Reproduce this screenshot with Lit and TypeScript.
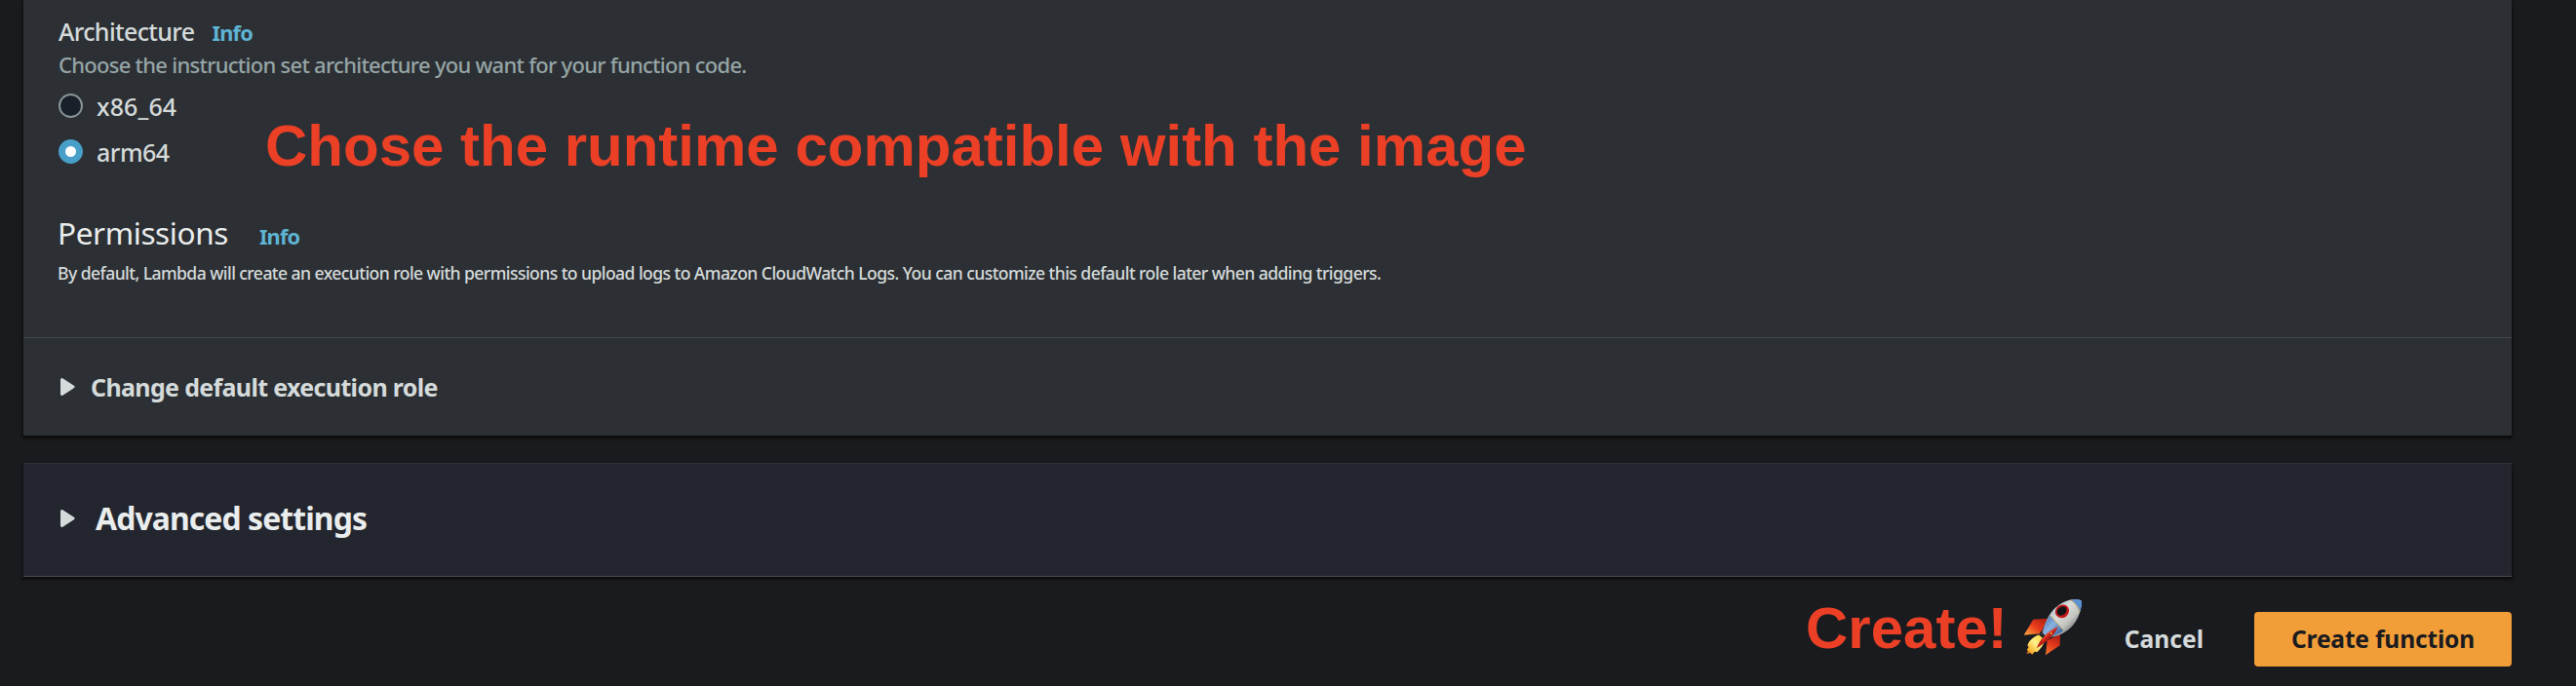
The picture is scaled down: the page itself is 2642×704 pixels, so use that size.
import { LitElement, html, css, svg } from "lit";

const rocket = svg`
  <defs>
    <linearGradient id="hull" x1="130" y1="70" x2="200" y2="140" gradientUnits="userSpaceOnUse">
      <stop offset="0" stop-color="#aebdc6"/><stop offset=".35" stop-color="#d9dcd8"/>
      <stop offset=".7" stop-color="#c3c5c1"/><stop offset="1" stop-color="#6d7377"/>
    </linearGradient>
    <linearGradient id="blue" x1="110" y1="105" x2="160" y2="155" gradientUnits="userSpaceOnUse">
      <stop offset="0" stop-color="#4d7fc0"/><stop offset=".45" stop-color="#8db2df"/><stop offset="1" stop-color="#34629f"/>
    </linearGradient>
    <linearGradient id="finA" x1="105" y1="100" x2="60" y2="158" gradientUnits="userSpaceOnUse">
      <stop offset="0" stop-color="#b3200f"/><stop offset=".5" stop-color="#e93a1b"/><stop offset="1" stop-color="#f9a13a"/>
    </linearGradient>
    <linearGradient id="finB" x1="155" y1="155" x2="118" y2="215" gradientUnits="userSpaceOnUse">
      <stop offset="0" stop-color="#a81c10"/><stop offset=".5" stop-color="#e2371c"/><stop offset="1" stop-color="#f0762b"/>
    </linearGradient>
    <linearGradient id="flame" x1="108" y1="158" x2="56" y2="214" gradientUnits="userSpaceOnUse">
      <stop offset="0" stop-color="#ffd93c"/><stop offset=".45" stop-color="#fff08a"/><stop offset=".8" stop-color="#fbb42b"/><stop offset="1" stop-color="#c4561a"/>
    </linearGradient>
  </defs>
  <path fill="url(#finA)" d="M76 107 122 104 98 151 47 155Z"/>
  <path fill="url(#finB)" d="M159 152 158 187 114 217 119 172Z"/>
  <path fill="url(#flame)" d="M95 154C78 160 62 172 58 188L62 191 56 202 60 205 54 214 66 210 73 215 80 206 88 208C99 196 107 188 112 172Z"/>
  <path fill="#2b2c31" d="M98 143 112 148 108 166 94 156Z"/>
  <path fill="url(#hull)" d="M225 50C211 43 186 45 165 56 136 72 116 100 105 147L116 160C138 162 160 156 182 140 210 119 224 85 225 50Z"/>
  <path fill="url(#blue)" d="M128 95 169 141C153 156 135 162 116 160L105 147C109 126 116 109 128 95Z"/>
  <path fill="#5c93d4" d="M225 50C214 43 202 44 190 47 205 54 214 68 219 84 224 73 226 62 225 50Z"/>
  <path fill="none" stroke="#c5a45b" stroke-width="3" d="M128 95 169 141M190 47Q211 57 219 84"/>
  <ellipse cx="165" cy="82" rx="22" ry="20" fill="#c4191b" transform="rotate(-40 165 82)"/>
  <ellipse cx="164" cy="81" rx="16" ry="13" fill="#111417" transform="rotate(-40 164 81)"/>
  <path fill="#bd1f17" d="M151 130C145 151 126 170 87 196 94 172 112 151 151 130Z"/>
  <path fill="#e8472a" d="M151 130C138 143 113 158 104 178 102 166 118 146 151 130Z"/>
  <circle cx="131" cy="150" r="3" fill="#d5b02c"/>`;

const caret = html`<svg class="caret" width="16" height="20" viewBox="0 0 16 20">
  <path d="M2.5 2.5 14 10 2.5 17.500Z" fill="#d5dbdb" stroke="#d5dbdb" stroke-width="3" stroke-linejoin="round"/></svg>`;

class AppRoot extends LitElement {
  static styles = css`
    :host { display: block; position: relative; box-sizing: border-box; height: 704px; overflow: hidden;
      padding: 0 66px 0 24px; background: #1a1b1f; color: #d5dbdb; white-space: nowrap;
      font-family: "Noto Sans", "Open Sans", sans-serif; }
    .card { box-sizing: border-box; background: #2c2f33; box-shadow: 0 2px 3px 1px rgba(0,0,0,.55); }
    .main { display: flex; flex-direction: column; height: 447px; }
    .body { box-sizing: border-box; height: 346px; padding: 12px 36px 0; }
    .row { display: flex; align-items: baseline; }
    .label { font-size: 25px; line-height: 40px; letter-spacing: -.63px; font-weight: 500; }
    .info { font-size: 21.8px; line-height: 20px; letter-spacing: -.8px; font-weight: 700; color: #5fb4d4; margin-left: 18px; }
    .hint { font-size: 22px; line-height: 29px; letter-spacing: -.73px; font-weight: 500; color: #95a5a6; margin-bottom: 4px; }
    .option { display: flex; align-items: center; height: 47px; gap: 14px; font-size: 25px; line-height: 40px; font-weight: 500; letter-spacing: -.5px; }
    .wide { letter-spacing: .1px; }
    .radio { box-sizing: border-box; width: 25px; height: 25px; border-radius: 50%; border: 2px solid #879596; background: #1a2029; }
    .radio.on { border: 7.500px solid #489fc8; background: #fff; }
    h2 { margin: 0 0 0 -1px; font-weight: 400; font-size: 31.5px; line-height: 40px; letter-spacing: -.4px; color: #eaeded; }
    .perm { margin-top: 40px; }
    .perm .info { margin-left: 32px; }
    .note { margin: 9px 0 0 -1px; font-size: 17.6px; line-height: 25px; letter-spacing: -.58px; font-weight: 500; }
    .role { display: flex; align-items: center; box-sizing: border-box; height: 101px; border-top: 1px solid #43484d; padding: 0 37px; gap: 16px;
      font-size: 25px; font-weight: 700; letter-spacing: -.66px; }
    .role span { padding-bottom: 1px; }
    .advanced { display: flex; align-items: center; height: 117px; margin-top: 28px; padding: 0 37px 4px; gap: 21px;
      background: #23262e; border-top: 1px solid #303236; border-bottom: 1px solid #4b4b4e;
      color: #eaeded; font-size: 31.9px; font-weight: 700; letter-spacing: -.9px; }
    .caret { display: block; flex: none; }
    .actions { display: flex; justify-content: flex-end; align-items: center; margin-top: 36px; gap: 52px; }
    button { font: 700 24.6px/40px "Noto Sans", "Open Sans", sans-serif; border: 0; background: none; color: #d5dbdb; padding: 0; height: 56px; }
    .primary { width: 264px; border-radius: 4px; background: #f29e38; color: #1a1b1f; letter-spacing: -.2px; }
    .mark { position: absolute; color: #eb4026; font: 700 60px/60px "Liberation Sans", Arial, sans-serif; }
    .runtime { left: 272px; top: 120px; }
    .create { left: 1852px; top: 615px; }
    .rocket { position: absolute; left: 2060px; top: 600px; }
  `;

  render() {
    return html`
      <section class="card main">
        <div class="body">
          <div class="row"><span class="label">Architecture</span><span class="info">Info</span></div>
          <div class="hint">Choose the instruction set architecture you want for your function code.</div>
          <label class="option wide"><span class="radio"></span>x86_64</label>
          <label class="option"><span class="radio on"></span>arm64</label>
          <div class="row perm"><h2>Permissions</h2><span class="info">Info</span></div>
          <div class="note">By default, Lambda will create an execution role with permissions to upload logs to Amazon CloudWatch Logs. You can customize this default role later when adding triggers.</div>
        </div>
        <div class="role">${caret}<span>Change default execution role</span></div>
      </section>
      <section class="card advanced">${caret}<span>Advanced settings</span></section>
      <footer class="actions"><button>Cancel</button><button class="primary">Create function</button></footer>
      <div class="mark runtime">Chose the runtime compatible with the image</div>
      <div class="mark create">Create!</div>
      <svg class="rocket" width="90" height="90" viewBox="0 0 270 270" role="img">${rocket}</svg>
    `;
  }
}
customElements.define("app-root", AppRoot);
